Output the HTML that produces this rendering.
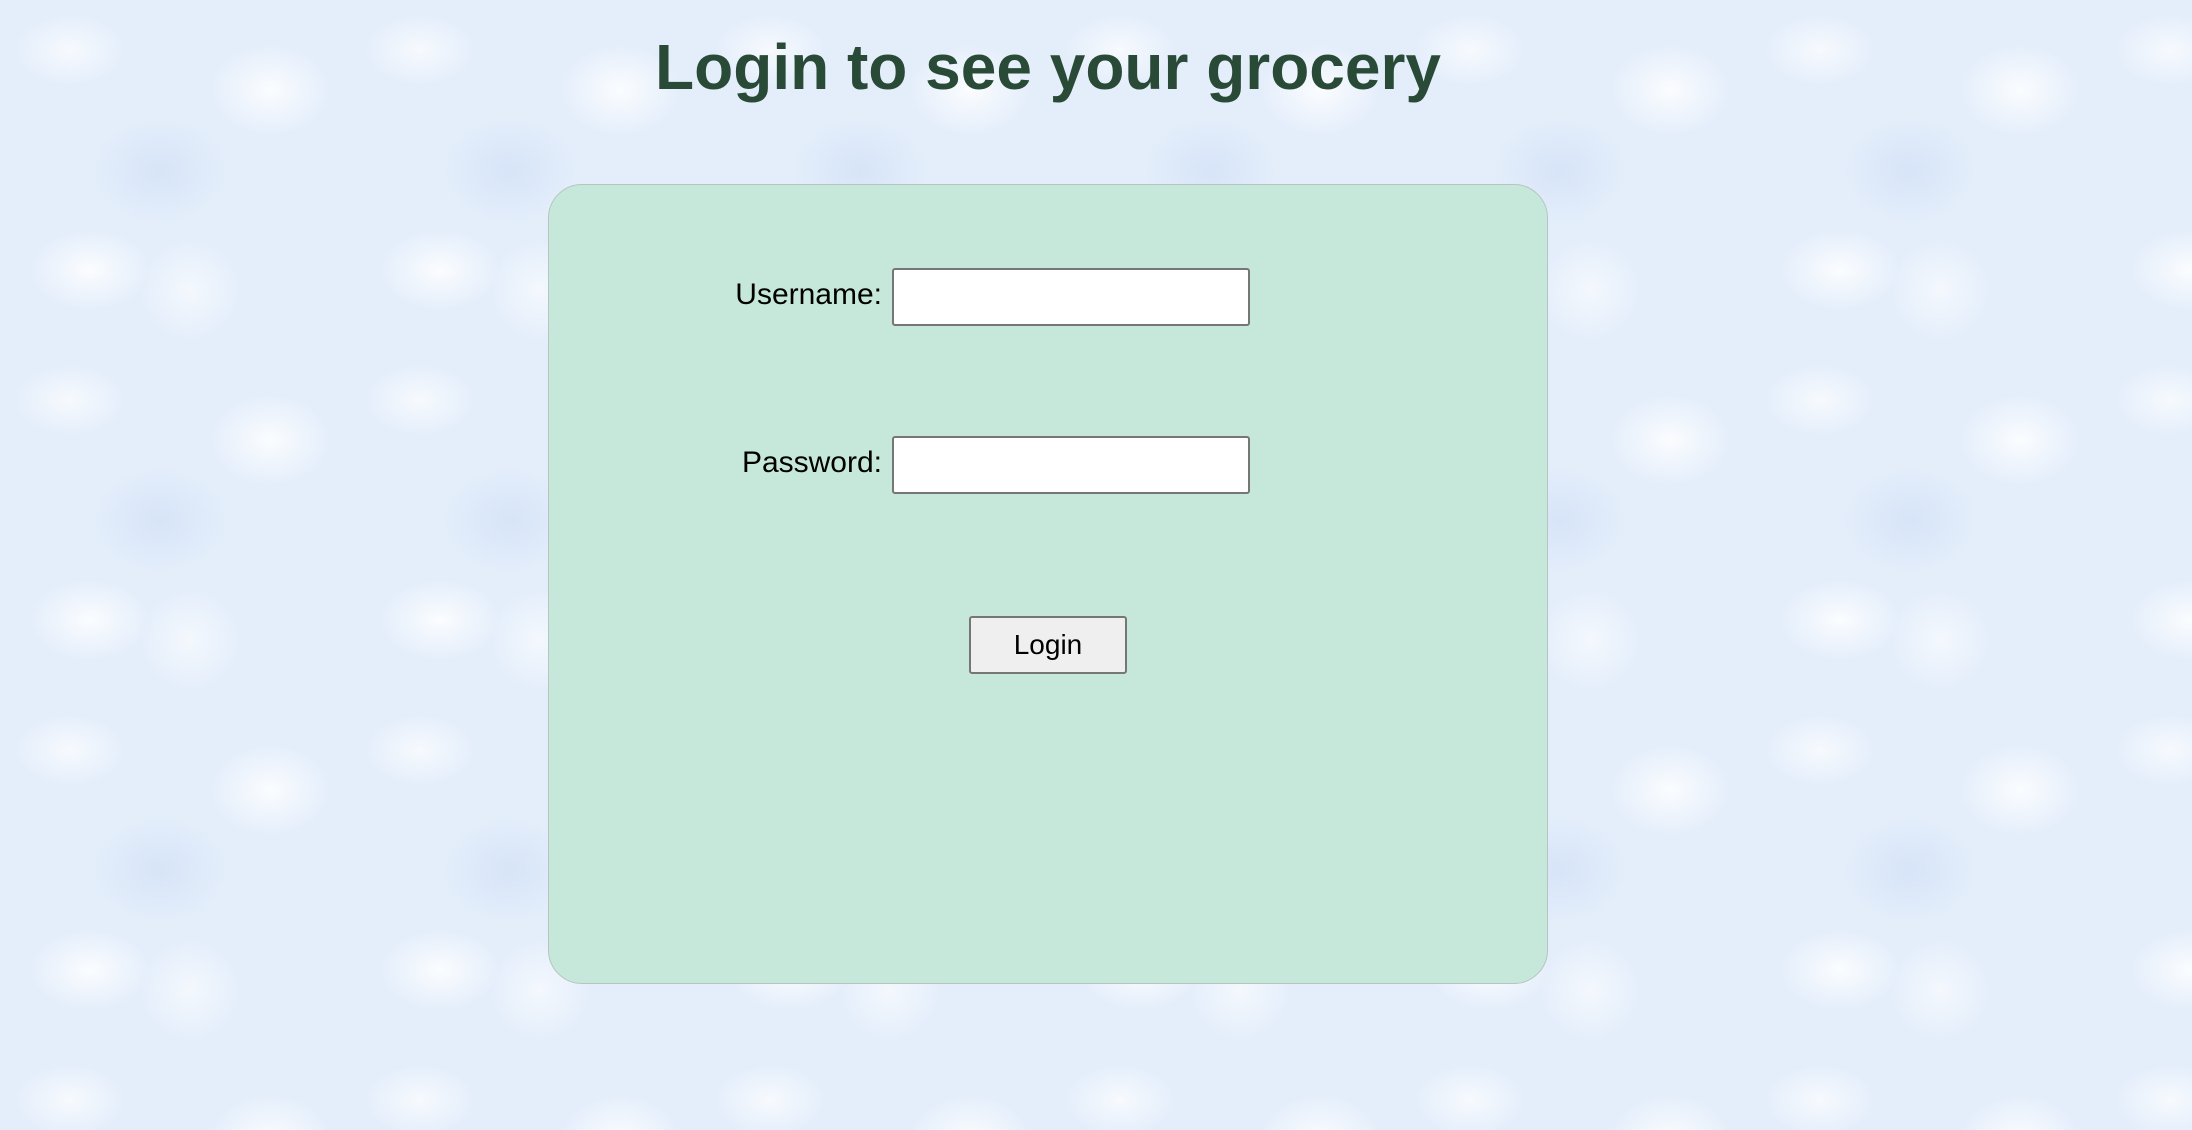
<!DOCTYPE html>
<html><head><meta charset="utf-8"><style>
html,body{margin:0;padding:0;width:2192px;height:1130px;overflow:hidden}
body{background-color:#e4eefb;
background-image:
radial-gradient(ellipse 60px 40px at 90px 270px,rgba(255,255,255,.85),rgba(255,255,255,0)),
radial-gradient(ellipse 60px 45px at 270px 90px,rgba(255,255,255,.85),rgba(255,255,255,0)),
radial-gradient(ellipse 50px 50px at 190px 290px,rgba(255,255,255,.6),rgba(255,255,255,0)),
radial-gradient(ellipse 55px 35px at 70px 50px,rgba(255,255,255,.7),rgba(255,255,255,0)),
radial-gradient(ellipse 70px 55px at 160px 170px,rgba(205,222,246,.6),rgba(205,222,246,0));
background-size:350px 350px;
font-family:"Liberation Sans",Arial,sans-serif;position:relative}
h1{position:absolute;left:0;width:2096px;top:30px;margin:0;text-align:center;font-size:64px;font-weight:bold;color:#2a4a38}
.panel{position:absolute;left:548px;top:184px;width:998px;height:798px;background:#c5e8db;border:1px solid #b8c4c0;border-radius:34px}
.lbl{position:absolute;right:1310px;font-size:30px;color:#000;line-height:34px}
.inp{position:absolute;left:892px;width:354px;height:54px;background:#fff;border:2px solid #767676;border-radius:3px}
.btn{position:absolute;left:969px;top:616px;width:154px;height:54px;background:#efefef;border:2px solid #767676;border-radius:3px;font-size:28px;text-align:center;line-height:54px;color:#000}
</style></head><body>
<h1>Login to see your grocery</h1>
<div class="panel"></div>
<div class="lbl" style="top:278px">Username:</div>
<div class="inp" style="top:268px"></div>
<div class="lbl" style="top:446px">Password:</div>
<div class="inp" style="top:436px"></div>
<div class="btn">Login</div>
</body></html>
